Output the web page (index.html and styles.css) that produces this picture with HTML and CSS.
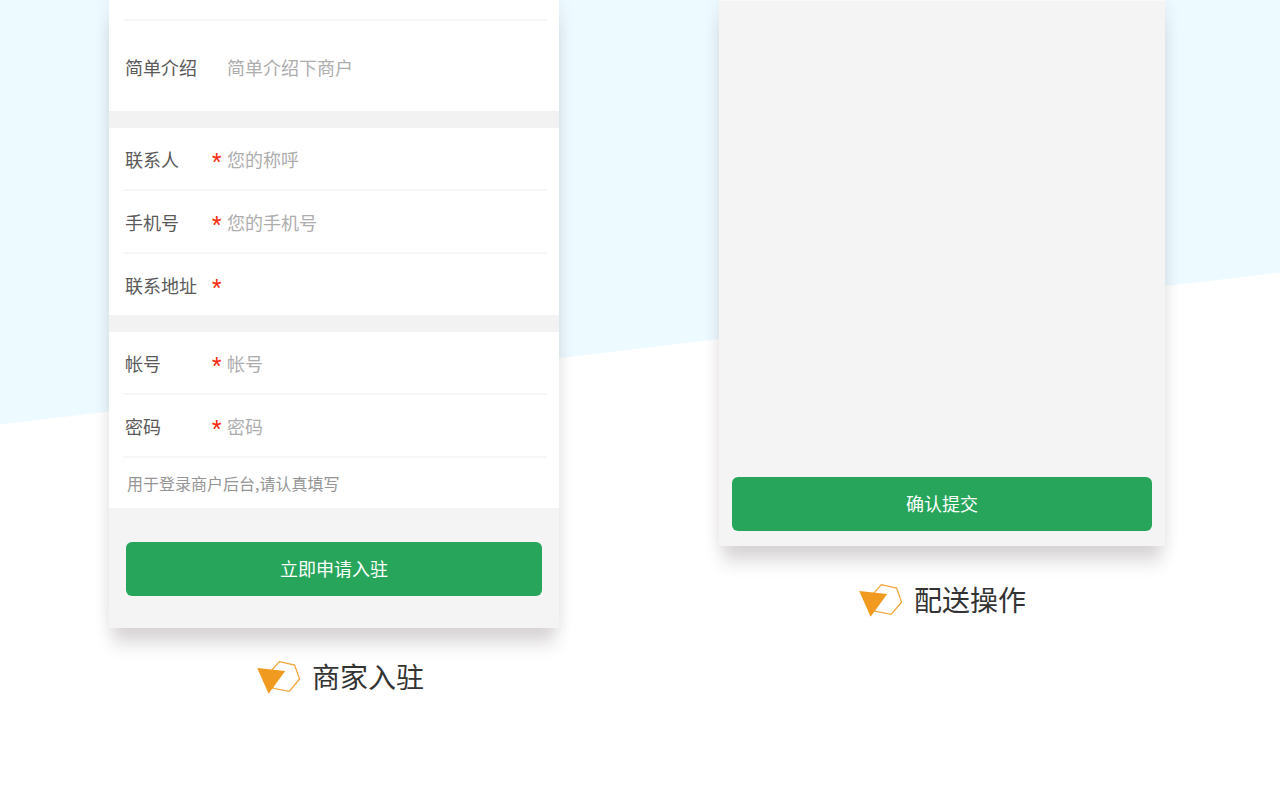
FILE: index.html
```html
<!DOCTYPE html>
<html lang="zh-CN">
<head>
    <meta charset="UTF-8">
    <meta name="viewport" content="width=device-width, initial-scale=1.0">
    <title>商家入驻</title>
    <link rel="stylesheet" href="styles.css">
</head>
<body>
<main class="page">
    <!-- 商家入驻 -->
    <section class="column merchant">
        <form class="phone">
            <div class="group">
                <div class="row row-cut"></div>
                <div class="row row-intro">
                    <label for="intro">简单介绍</label>
                    <span class="star"></span>
                    <input type="text" id="intro" placeholder="简单介绍下商户">
                </div>
            </div>
            <div class="group">
                <div class="row">
                    <label for="contact">联系人</label>
                    <span class="star">*</span>
                    <input type="text" id="contact" placeholder="您的称呼">
                </div>
                <div class="row">
                    <label for="mobile">手机号</label>
                    <span class="star">*</span>
                    <input type="tel" id="mobile" placeholder="您的手机号">
                </div>
                <div class="row">
                    <label for="address">联系地址</label>
                    <span class="star">*</span>
                    <input type="text" id="address">
                </div>
            </div>
            <div class="group">
                <div class="row">
                    <label for="account">帐号</label>
                    <span class="star">*</span>
                    <input type="text" id="account" placeholder="帐号">
                </div>
                <div class="row">
                    <label for="password">密码</label>
                    <span class="star">*</span>
                    <input type="password" id="password" placeholder="密码">
                </div>
                <p class="hint">用于登录商户后台,请认真填写</p>
            </div>
            <div class="footer">
                <button type="button" class="btn">立即申请入驻</button>
            </div>
        </form>
        <h2 class="caption">
            <svg class="mark" viewBox="-1 -1 45 35" aria-hidden="true">
                <path class="mark-line" d="M22.3 1.6 37.6 5 42.6 19 32.3 31.3 16.3 28.3 11.5 14Z"/>
                <path class="mark-fill" d="M0.2 8 28.2 11 11.6 33.8Z"/>
            </svg>
            商家入驻
        </h2>
    </section>

    <!-- 配送操作 -->
    <section class="column delivery">
        <div class="phone">
            <button type="button" class="btn">确认提交</button>
        </div>
        <h2 class="caption">
            <svg class="mark" viewBox="-1 -1 45 35" aria-hidden="true">
                <path class="mark-line" d="M22.3 1.6 37.6 5 42.6 19 32.3 31.3 16.3 28.3 11.5 14Z"/>
                <path class="mark-fill" d="M0.2 8 28.2 11 11.6 33.8Z"/>
            </svg>
            配送操作
        </h2>
    </section>
</main>
</body>
</html>
```

FILE: styles.css
```css
* {
    box-sizing: border-box;
}

body {
    margin: 0;
    font-family: "Noto Sans CJK SC", sans-serif;
    color: #5a5a5a;
    background-color: #fff;
}

.page {
    display: grid;
    grid-template-columns: 450fr 446fr;
    column-gap: 160px;
    align-items: start;
    min-height: 100vh;
    padding: 0 115px 0 109px;
    background: linear-gradient(173.23deg, #edfaff 421px, #fff 422px);
}

.phone {
    background-color: #f4f4f4;
    box-shadow: 0 0 16px rgba(60, 40, 50, 0.08), 0 20px 16px -4px rgba(60, 40, 50, 0.17);
}

.group {
    background-color: #fff;
}

.group + .group {
    border-top: 17px solid #f2f2f2;
}

.row {
    display: flex;
    align-items: center;
    height: 63px;
    margin: 0 12px 0 14px;
    padding: 1px 0 0 2px;
    border-bottom: 2px solid #f6f6f6;
    font-size: 18px;
}

.row:last-child {
    height: 61px;
    border-bottom: none;
}

.row-cut {
    height: 21px;
}

.row-intro:last-child {
    height: 90px;
}

.row label {
    width: 87px;
}

.star {
    width: 15px;
    color: #f62d0f;
    font-family: Roboto, sans-serif;
    font-size: 22px;
    line-height: 24px;
    padding-top: 6px;
}

.row input {
    flex: 1;
    min-width: 0;
    padding: 0;
    border: none;
    outline: none;
    background: none;
    font: inherit;
    color: #5a5a5a;
}

.row input::placeholder {
    color: #adadad;
}

.hint {
    margin: 0;
    padding: 0 18px;
    font-size: 16px;
    line-height: 50px;
    color: #959595;
}

.footer {
    padding: 34px 17px 32px;
}

.btn {
    display: block;
    width: 100%;
    height: 54px;
    padding: 0 0 2px;
    border: none;
    border-radius: 6px;
    background-color: #27a65b;
    color: #fff;
    font-family: inherit;
    font-size: 18px;
    cursor: pointer;
}

.delivery .phone {
    display: flex;
    align-items: flex-end;
    min-height: 546px;
    padding: 0 13px 15px;
    border-top: 1px solid #fafafa;
}

.caption {
    display: flex;
    justify-content: center;
    align-items: center;
    gap: 11px;
    margin: 0;
    padding: 28px 0 0 12px;
    font-size: 28px;
    font-weight: 400;
    line-height: 40px;
    color: #333;
}

.delivery .caption {
    padding: 33px 0 0;
}

.mark {
    width: 45px;
    height: 35px;
}

.mark-line {
    fill: none;
    stroke: #f3a63c;
    stroke-width: 1.3;
}

.mark-fill {
    fill: #f19a20;
}
```
